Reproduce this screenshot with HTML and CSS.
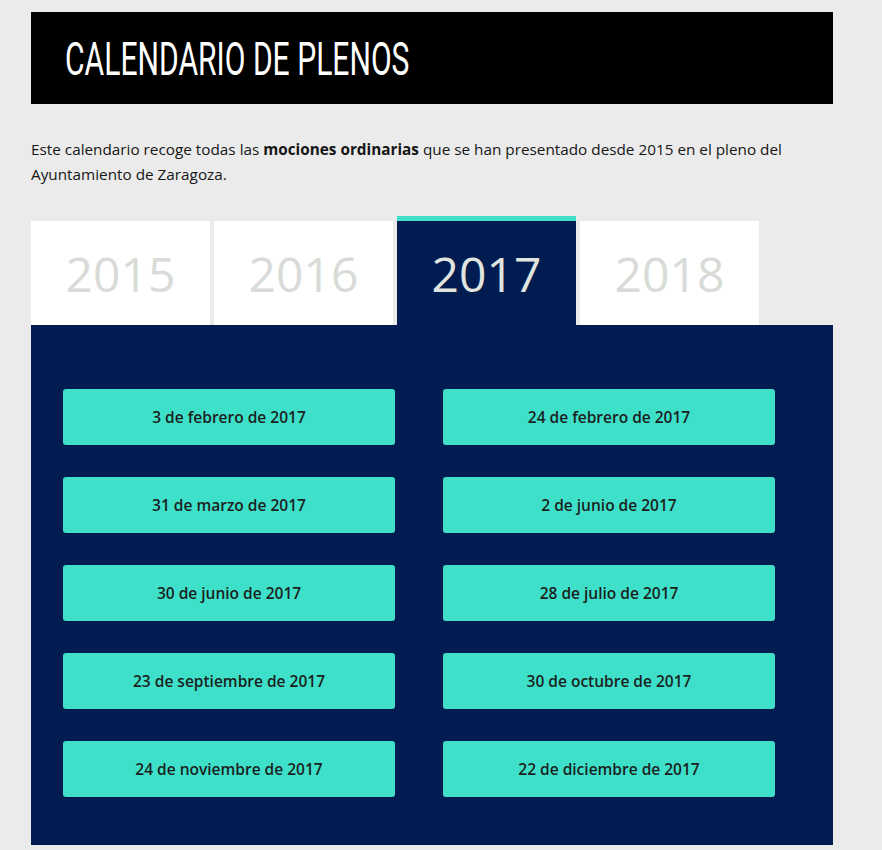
FILE: index.html
```html
<!DOCTYPE html>
<html lang="es">
<head>
<meta charset="utf-8">
<title>Calendario de plenos</title>
<link rel="stylesheet" href="styles.css">
</head>
<body>
<div class="page">
  <header class="banner">
    <h1 class="title">CALENDARIO DE PLENOS</h1>
  </header>
  <p class="intro">Este calendario recoge todas las <strong>mociones ordinarias</strong> que se han presentado desde 2015 en el pleno del Ayuntamiento de Zaragoza.</p>
  <nav class="tabs">
    <div class="tab">2015</div>
    <div class="tab">2016</div>
    <div class="tab active">2017</div>
    <div class="tab">2018</div>
  </nav>
  <section class="panel">
    <div class="grid">
      <a class="btn">3 de febrero de 2017</a>
      <a class="btn">24 de febrero de 2017</a>
      <a class="btn">31 de marzo de 2017</a>
      <a class="btn">2 de junio de 2017</a>
      <a class="btn">30 de junio de 2017</a>
      <a class="btn">28 de julio de 2017</a>
      <a class="btn">23 de septiembre de 2017</a>
      <a class="btn">30 de octubre de 2017</a>
      <a class="btn">24 de noviembre de 2017</a>
      <a class="btn">22 de diciembre de 2017</a>
    </div>
  </section>
</div>
</body>
</html>
```
FILE: styles.css
```css
html, body {
  margin: 0;
  padding: 0;
  background: #ebebeb;
}
body {
  font-family: "Open Sans", "Noto Sans", sans-serif;
  color: #161616;
}
.page {
  width: 802px;
  padding: 12px 0 0 31px;
}
.banner {
  background: #000;
  height: 92px;
  display: flex;
  align-items: center;
  padding-left: 34px;
}
.title {
  margin: 0;
  color: #fff;
  font-family: "Roboto", sans-serif;
  font-weight: 400;
  font-size: 47px;
  line-height: 1;
  white-space: nowrap;
  transform: scaleX(0.64);
  transform-origin: left center;
}
.intro {
  margin: 33px 0 0;
  font-size: 15.3px;
  line-height: 25px;
  width: 780px;
}
.intro strong {
  font-weight: 700;
}
.tabs {
  display: flex;
  gap: 4px;
  margin-top: 29px;
  align-items: flex-end;
}
.tab {
  width: 179px;
  height: 104px;
  background: #fff;
  color: #d8dbd7;
  font-size: 48px;
  font-weight: 400;
  display: flex;
  align-items: center;
  justify-content: center;
  box-sizing: border-box;
}
.tab.active {
  height: 109px;
  background: #001c50;
  color: #e1e4df;
  border-top: 5px solid #3ee0c9;
}
.panel {
  background: #001c50;
  padding: 64px 58px 48px 32px;
}
.grid {
  display: grid;
  grid-template-columns: 332px 332px;
  column-gap: 48px;
  row-gap: 32px;
}
.btn {
  height: 56px;
  background: #3ee0c9;
  border-radius: 3px;
  display: flex;
  align-items: center;
  justify-content: center;
  font-size: 15.5px;
  font-weight: 600;
  color: #1b1f1e;
}
```
